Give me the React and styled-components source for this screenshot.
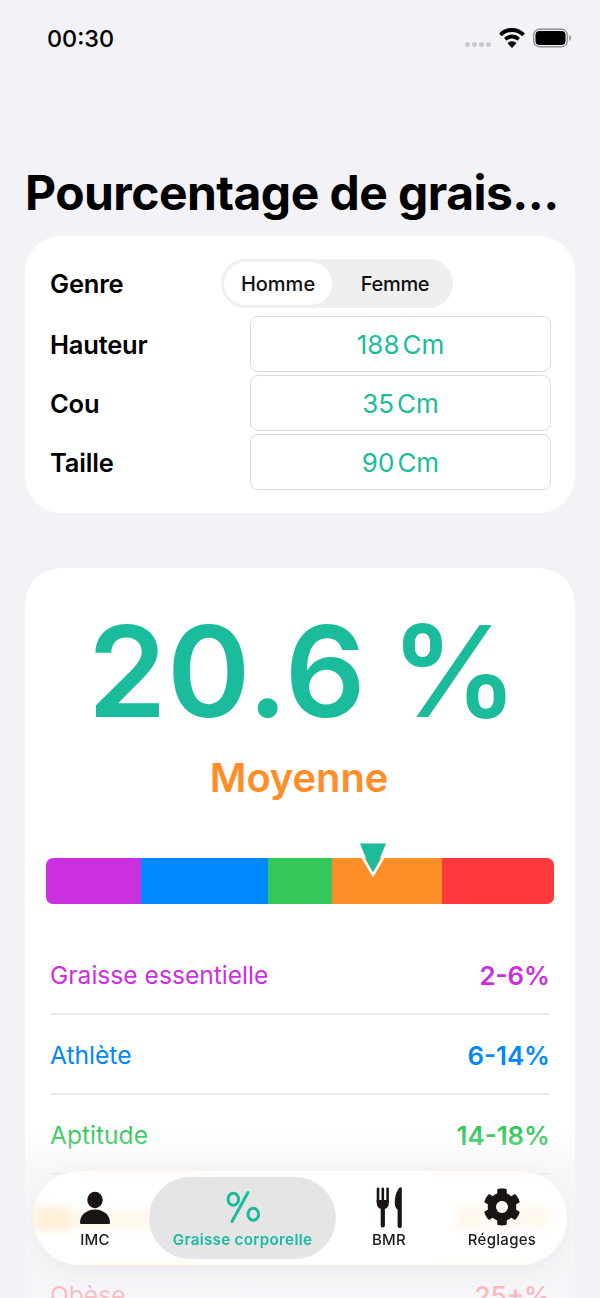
import React from "react";
import styled, { createGlobalStyle } from "styled-components";
import { FaCog } from "react-icons/fa";

const TEAL = "#1abc9c";

const GlobalStyle = createGlobalStyle`
  html, body {
    margin: 0;
    padding: 0;
    background: #f2f2f7;
  }
  * {
    box-sizing: border-box;
  }
`;

const Page = styled.div`
  width: 600px;
  height: 1298px;
  position: relative;
  overflow: hidden;
  background: #f2f2f7;
  font-family: Inter, "Liberation Sans", sans-serif;
  color: #000;
`;

const StatusBar = styled.div`
  height: 76px;
  padding: 0 28px 0 47px;
  display: flex;
  align-items: center;
  justify-content: space-between;
`;

const Clock = styled.div`
  font-size: 23.4px;
  font-weight: 500;
`;

const StatusIcons = styled.div`
  display: flex;
  align-items: center;
  gap: 8px;
`;

const Dots = styled.div`
  display: flex;
  gap: 2px;
  margin-top: 12px;
`;

const Dot = styled.span`
  width: 5px;
  height: 5px;
  border-radius: 50%;
  background: #c9c9ce;
`;

const Title = styled.h1`
  margin: 87px 0 0;
  padding-left: 25px;
  height: 73px;
  font-size: 48px;
  line-height: 60px;
  font-weight: 700;
  letter-spacing: -0.55px;
  white-space: nowrap;
`;

const Card = styled.section`
  width: 550px;
  margin: 0 25px;
  background: #fff;
  border-radius: 36px;
`;

const FormCard = styled(Card)`
  height: 277px;
  padding: 23px 24px 0 25px;
  display: flex;
  flex-direction: column;
`;

const GenreRow = styled.div`
  height: 49px;
  margin-bottom: 8px;
  display: grid;
  grid-template-columns: 171px auto;
  align-items: center;
  justify-content: start;
`;

const Label = styled.div`
  font-size: 25.5px;
  font-weight: 600;
  letter-spacing: -0.2px;
`;

const Segmented = styled.div`
  width: 232px;
  height: 49px;
  padding: 3px;
  border-radius: 25px;
  background: #efeff0;
  display: flex;
`;

const Segment = styled.div`
  height: 43px;
  width: ${(p) => (p.$active ? "108px" : "118px")};
  padding-left: ${(p) => (p.$active ? "0" : "8px")};
  border-radius: 22px;
  background: ${(p) => (p.$active ? "#fff" : "transparent")};
  display: flex;
  align-items: center;
  justify-content: center;
  font-size: 20px;
  font-weight: 500;
  letter-spacing: ${(p) => (p.$active ? "0" : "-0.3px")};
  color: #111;
`;

const FieldRow = styled.div`
  height: 59px;
  display: grid;
  grid-template-columns: 200px 301px;
  align-items: start;
`;

const FieldLabel = styled(Label)`
  line-height: 58px;
`;

const Field = styled.div`
  height: 56px;
  border: 1px solid #dcdcde;
  border-radius: 8px;
  display: flex;
  align-items: center;
  justify-content: center;
  gap: 3px;
  font-size: 26px;
  font-weight: 400;
  color: ${TEAL};
`;

const ResultCard = styled(Card)`
  margin-top: 55px;
  height: 800px;
  padding: 0 25px 0 21px;
  display: flex;
  flex-direction: column;
`;

const BigValue = styled.div`
  margin-top: 28px;
  padding-left: 10px;
  height: 148px;
  line-height: 150px;
  text-align: center;
  font-size: 126.500px;
  font-weight: 600;
  letter-spacing: 0.5px;
  word-spacing: -8px;
  color: ${TEAL};
  white-space: nowrap;
`;

const Status = styled.div`
  margin-top: 10px;
  padding-left: 2px;
  height: 48px;
  line-height: 48px;
  text-align: center;
  font-size: 39.8px;
  font-weight: 600;
  color: #ff8d28;
`;

const Gauge = styled.div`
  position: relative;
  margin-top: 56px;
  width: 508px;
  height: 46px;
`;

const GaugeTrack = styled.div`
  height: 100%;
  border-radius: 7px;
  overflow: hidden;
  display: flex;
`;

const GaugeSegment = styled.div`
  width: ${(p) => p.$width}px;
  background: ${(p) => p.$color};
`;

const Marker = styled.svg`
  position: absolute;
  left: 311px;
  top: -16px;
`;

const List = styled.div`
  margin-top: 31px;
  padding-left: 4px;
  width: 504px;
`;

const RangeRow = styled.div`
  height: 80px;
  padding-top: 2px;
  display: flex;
  align-items: center;
  justify-content: space-between;
  border-bottom: 2px solid #e9e9eb;
  font-size: 24.6px;
  color: ${(p) => p.$color};
`;

const RangeValue = styled.span`
  font-size: 25.8px;
  font-weight: 600;
`;

const Fade = styled.div`
  position: absolute;
  left: 0;
  right: 0;
  bottom: 0;
  height: 168px;
  pointer-events: none;
  background: linear-gradient(
    to bottom,
    rgba(242, 242, 247, 0) 0%,
    rgba(242, 242, 247, 0.6) 24%,
    rgba(242, 242, 247, 0.72) 100%
  );
`;

const TabBar = styled.nav`
  position: absolute;
  left: 33px;
  top: 1171px;
  width: 534px;
  height: 94px;
  padding: 6px 0 6px 26px;
  border-radius: 47px;
  overflow: hidden;
  background: rgba(255, 255, 255, 0.94);
  box-shadow: 0 0 0 1px rgba(255, 240, 210, 0.5), 0 6px 24px rgba(0, 0, 0, 0.05);
  display: flex;
  align-items: stretch;
`;

const BarBlur = styled.div`
  position: absolute;
  left: 33px;
  top: 1171px;
  width: 534px;
  height: 94px;
  border-radius: 47px;
  backdrop-filter: blur(7px);
`;

const Ghost = styled.div`
  position: absolute;
  left: ${(p) => p.$left}px;
  top: ${(p) => p.$top}px;
  width: ${(p) => p.$width}px;
  height: ${(p) => p.$height}px;
  background: ${(p) => p.$color};
  filter: blur(4px);
`;

const Tab = styled.div`
  position: relative;
  flex: none;
  width: ${(p) => p.$width}px;
  margin-left: ${(p) => p.$gap || 0}px;
  height: 82px;
  padding-top: 8px;
  border-radius: 41px;
  background: ${(p) => (p.$active ? "rgba(225, 225, 228, 0.85)" : "transparent")};
  color: ${(p) => (p.$active ? TEAL : "#1b1b1d")};
  display: flex;
  flex-direction: column;
  align-items: center;
`;

const TabIcon = styled.div`
  height: 44px;
  display: flex;
  align-items: center;
  justify-content: center;
  color: ${(p) => (p.$active ? TEAL : "#1a1512")};
`;

const TabLabel = styled.div`
  margin-top: 2px;
  font-size: ${(p) => (p.$active ? "15.2px" : "15px")};
  line-height: 17px;
  font-weight: ${(p) => (p.$active ? 600 : 500)};
  letter-spacing: 0.3px;
  white-space: nowrap;
`;

const gaugeSegments = [
  { width: 95, color: "#cb30e0" },
  { width: 127, color: "#0088ff" },
  { width: 64, color: "#34c759" },
  { width: 110, color: "#ff8d28" },
  { width: 112, color: "#ff383c" },
];

const ranges = [
  { name: "Graisse essentielle", value: "2-6%", color: "#cb30e0" },
  { name: "Athlète", value: "6-14%", color: "#0088ff" },
  { name: "Aptitude", value: "14-18%", color: "#34c759" },
  { name: "Moyenne", value: "18-25%", color: "#ff8d28" },
  { name: "Obèse", value: "25+%", color: "#ff383c" },
];

const fields = [
  { label: "Hauteur", value: "188" },
  { label: "Cou", value: "35" },
  { label: "Taille", value: "90" },
];

const WifiIcon = () => (
  <svg width="26" height="20" viewBox="0 0 26 20" fill="#000">
    <path d="M13 0C8.2 0 3.9 1.9.6 5c-.3.3-.3.7 0 1l1.7 1.8c.3.3.7.3 1 0C5.900 5.400 9.300 3.900 13 3.900s7.100 1.500 9.700 3.900c.3.3.7.3 1 0L25.400 6c.3-.3.3-.7 0-1C22.100 1.900 17.800 0 13 0z" />
    <path d="M13 6.600c-2.900 0-5.500 1.100-7.500 2.900-.3.300-.3.700 0 1l1.700 1.800c.3.300.7.300 1 0 1.300-1.100 3-1.800 4.800-1.800s3.500.7 4.800 1.800c.3.300.7.300 1 0l1.700-1.800c.3-.3.3-.7 0-1-2-1.800-4.600-2.900-7.500-2.900z" />
    <path d="M13 13.200c-1.500 0-2.900.5-4 1.500-.3.300-.3.700 0 1l3.500 3.800c.3.300.7.300 1 0l3.500-3.800c.3-.3.3-.7 0-1-1.100-1-2.500-1.500-4-1.500z" />
  </svg>
);

const BatteryIcon = () => (
  <svg width="39" height="20" viewBox="0 0 39 20">
    <rect x="0.75" y="1.25" width="33.500" height="17.500" rx="5.500" fill="none" stroke="#8e8e93" strokeWidth="1.300" />
    <rect x="2.500" y="3" width="30" height="14" rx="4" fill="#000" />
    <path d="M36 7v6c1.400-.5 2.300-1.700 2.300-3S37.400 7.500 36 7z" fill="#a0a0a5" />
  </svg>
);

const PersonIcon = () => (
  <svg width="32" height="36" viewBox="0 0 32 36" fill="currentColor">
    <ellipse cx="16" cy="11" rx="7.700" ry="8.300" />
    <path d="M1 33.500C1 26 7.500 20.500 16 20.500S31 26 31 33.500c0 1-.7 1.500-1.500 1.500h-27C1.700 35 1 34.500 1 33.500z" />
  </svg>
);

const PercentIcon = () => (
  <svg width="36" height="34" viewBox="0 0 36 34" fill="none" stroke="currentColor" strokeWidth="3" strokeLinecap="round">
    <ellipse cx="8.300" cy="9.200" rx="5.300" ry="6" />
    <ellipse cx="28.300" cy="24.300" rx="5.300" ry="6" />
    <path d="M23 2.500L7 31.500" />
  </svg>
);

const CutleryIcon = () => (
  <svg width="28" height="41" viewBox="0 0 28 41" fill="currentColor">
    <rect x="1.700" y="0.500" width="2.600" height="15" rx="1.300" />
    <rect x="6.500" y="0.500" width="2.600" height="15" rx="1.300" />
    <rect x="11.300" y="0.500" width="2.600" height="15" rx="1.300" />
    <path d="M1.700 13h12.200v3c0 3-1.500 5-4 6v16.500a2.100 2.100 0 0 1-4.200 0V22c-2.500-1-4-3-4-6z" />
    <path d="M26.800 1.500c0-.8-.5-1.300-1.100-1.300-.5 0-1 .2-1.500.8-2.700 3-4.400 8.500-4.400 14.500 0 3.500 1 6 2.800 7.300v16.200a2.100 2.100 0 0 0 4.200 0z" />
  </svg>
);

const App = () => {
  return (
    <Page>
      <GlobalStyle />
      <StatusBar>
        <Clock>00:30</Clock>
        <StatusIcons>
          <Dots>
            <Dot />
            <Dot />
            <Dot />
            <Dot />
          </Dots>
          <WifiIcon />
          <BatteryIcon />
        </StatusIcons>
      </StatusBar>

      <Title>Pourcentage de grais...</Title>

      <FormCard>
        <GenreRow>
          <Label>Genre</Label>
          <Segmented>
            <Segment $active>Homme</Segment>
            <Segment>Femme</Segment>
          </Segmented>
        </GenreRow>
        {fields.map((field) => (
          <FieldRow key={field.label}>
            <FieldLabel>{field.label}</FieldLabel>
            <Field>
              <span>{field.value}</span>
              <span>Cm</span>
            </Field>
          </FieldRow>
        ))}
      </FormCard>

      <ResultCard>
        <BigValue>20.6 %</BigValue>
        <Status>Moyenne</Status>
        <Gauge>
          <GaugeTrack>
            {gaugeSegments.map((segment) => (
              <GaugeSegment key={segment.color} $width={segment.width} $color={segment.color} />
            ))}
          </GaugeTrack>
          <Marker width="32" height="36" viewBox="0 0 32 36">
            <path d="M3 1.500h26L16 33z" fill={TEAL} />
            <path d="M4 12.500L16 33l12-20.500" fill="none" stroke="#fff" strokeWidth="2.500" />
          </Marker>
        </Gauge>
        <List>
          {ranges.map((range) => (
            <RangeRow key={range.name} $color={range.color}>
              <span>{range.name}</span>
              <RangeValue>{range.value}</RangeValue>
            </RangeRow>
          ))}
        </List>
      </ResultCard>

      <Fade />
      <BarBlur />

      <TabBar>
        <Ghost $left={0} $top={36} $width={36} $height={24} $color="rgba(255, 205, 130, 0.3)" />
        <Ghost $left={34} $top={40} $width={110} $height={18} $color="rgba(255, 205, 130, 0.14)" />
        <Ghost $left={422} $top={36} $width={96} $height={22} $color="rgba(255, 205, 130, 0.12)" />
        <Ghost $left={50} $top={-3} $width={120} $height={5} $color="rgba(255, 205, 130, 0.2)" />
        <Ghost $left={50} $top={92} $width={120} $height={5} $color="rgba(255, 205, 130, 0.2)" />
        <Ghost $left={400} $top={-3} $width={100} $height={5} $color="rgba(255, 215, 150, 0.2)" />
        <Ghost $left={400} $top={92} $width={100} $height={5} $color="rgba(255, 215, 150, 0.2)" />
        <Tab $width={72}>
          <TabIcon>
            <PersonIcon />
          </TabIcon>
          <TabLabel>IMC</TabLabel>
        </Tab>
        <Tab $active $width={187} $gap={18}>
          <TabIcon $active>
            <PercentIcon />
          </TabIcon>
          <TabLabel $active>Graisse corporelle</TabLabel>
        </Tab>
        <Tab $width={80} $gap={13}>
          <TabIcon>
            <CutleryIcon />
          </TabIcon>
          <TabLabel>BMR</TabLabel>
        </Tab>
        <Tab $width={90} $gap={28}>
          <TabIcon>
            <FaCog size={38} />
          </TabIcon>
          <TabLabel>Réglages</TabLabel>
        </Tab>
      </TabBar>
    </Page>
  );
};

export default App;
